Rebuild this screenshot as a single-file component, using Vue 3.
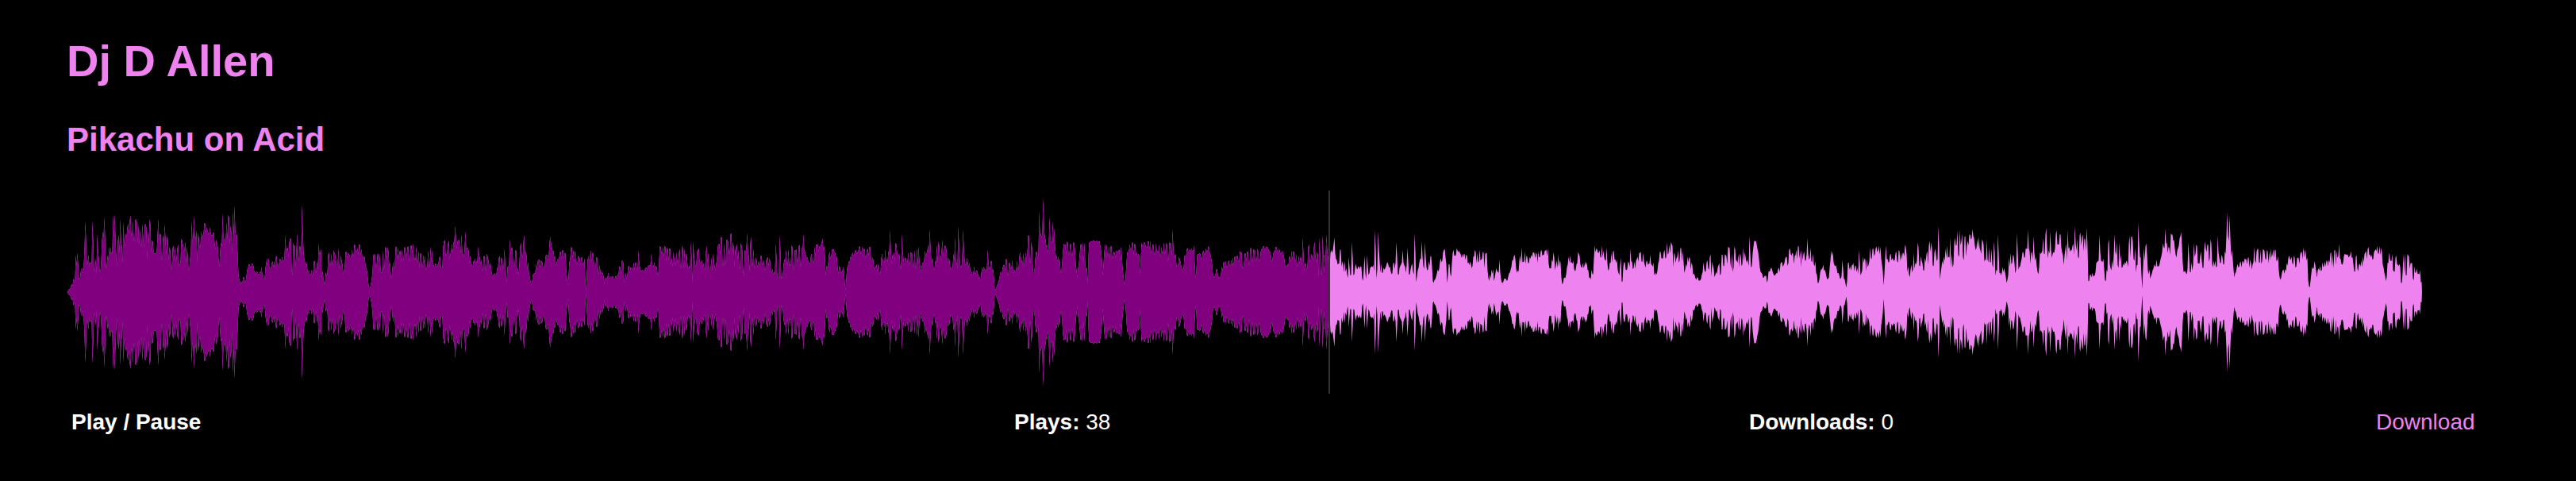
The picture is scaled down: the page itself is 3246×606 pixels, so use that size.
<script setup>
import { ref, computed } from 'vue'

const WIDTH = 2968
const HEIGHT = 256
const MID = HEIGHT / 2

// Loudness of the track. Triples are "position,quiet,loud" and pairs are
// "position,peak"; levels count thirds of a unit from the middle line.
const sections = [
  { from: -24, scale: 3, data: `72,0,0 90,18,30 100,30,70 107,140 112,149 118,35,50 125,60,80 132,70,170 142,268 150,90,155 160,75,125 169,270 180,75,135 188,220 198,60,120 207,180,230 214,283 220,70,110 232,130,185 243,140,180 247,292 253,295 258,75,130 268,160,240 274,275 282,110,160 287,266 295,200,230 303,220,260 313,290 320,180,275 333,200,270 345,150,250 357,180,275 370,100,265 383,170,275 392,150,220 405,130,150 417,277 420,150,250 432,130,240 437,60,180 443,256 450,130,215 465,90,140 478,90,200 500,70,210 520,130,225 532,50,140 544,268 554,289 562,90,255 572,160,200 587,215,265 600,230,250 620,200,245 632,150,225 648,95,130 655,160,210 661,297 668,170,200 676,190,292 686,190,275 695,120,220 701,305 707,327 714,180,232 719,60,90 725,32,36 740,38,58 748,40,45 755,90,105 773,80,115 790,65,80 800,55,75 808,95 818,38,65 830,80,135 845,80,105 865,90,150 880,105,125 893,120,170 898,216 912,110,205 928,80,200 943,222 952,110,190 961,331 968,100,190 980,70,100 995,45,80 1005,70,135 1015,80,110 1023,183 1033,60,165 1041,30,60 1045,0,40 1050,50,80 1063,80,180 1085,80,165 1100,85,165 1115,60,100 1125,120,165 1140,110,140 1152,140,182 1168,140,184 1185,130,170 1198,100,140 1206,60,80 1213,17,17 1220,17,17 1228,80,145 1245,85,140 1262,60,150 1285,120,182 1298,50,70 1310,90,160 1325,110,175 1350,110,165 1378,130,190 1403,80,180 1430,90,155 1455,110,175 1465,80,110 1480,95,140 1498,110,210` },
  { from: 456, scale: 3, data: `60,130,210 75,115,205 90,150,195 100,250 110,150,210 122,155,220 132,130,180 139,230 148,110,185 158,110,135 170,75,110 180,95,165 187,172 200,80,140 214,95,160 230,85,115 240,58,70 255,68,75 262,90,125 275,85,158 286,165 293,30,60 300,85,130 307,200 316,90,175 328,80,165 338,50,100 345,140,175 352,130,205 361,215 370,85,160 380,60,80 387,15,30 397,75,95 415,85,125 432,70,110 445,110,165 452,120,160 460,190,215 470,140,160 482,75,115 490,130,142 510,110,170 520,90,140 525,10,30 530,90,110 537,140,173 555,110,160 575,100,140 588,80,145 594,5,20 600,85,130 610,110,175 625,90,140 640,80,135 648,45,80 655,60,80 663,32,50 670,52,56 683,55,85 690,50,60 710,48,62 715,65,105 733,60,120 745,30,75 755,65,100 770,80,110 785,80,110 793,158 800,78,92 810,75,80 828,90,100 840,145 845,95,112 860,90,112 866,35,60 872,145,173 890,120,180 902,120,190 915,85,150 932,80,145 955,85,185 970,85,165 985,75,95 992,188 995,20,60 1000,193 1010,80,165 1022,90,160 1038,80,110 1050,85,175 1063,80,120 1075,85,170 1082,70,85 1090,120,188 1105,125,213 1115,80,180 1125,140,200 1143,130,217 1155,80,150 1165,100,180 1180,80,180 1193,50,150 1204,223 1213,75,170 1219,90,205 1230,80,185 1243,85,115 1255,100,140 1270,80,110 1282,90,140 1300,65,85 1312,182 1317,40,60 1327,215 1335,50,60 1347,100,155 1370,90,172 1385,80,150 1400,95,175 1417,220 1425,130,150 1440,105,110 1450,110,175 1462,120,190 1475,150,180 1486,170,213 1498,130,170` },
  { from: 936, scale: 3, data: `60,60,80 66,90,130 78,120,170 97,140,172 108,60,100 118,60,90 127,70,105 135,5,20 141,90,95 155,120,150 175,125,170 193,140,180 210,120,160 230,130,175 247,65,90 257,80,118 265,65,75 272,100,160 295,120,175 304,235 315,100,140 325,140,215 343,90,120 349,220 360,100,140 380,90,160 400,100,160 412,110,175 420,65,80 430,105,140 445,140,200 454,236 462,110,160 470,60,80 481,120,215 492,100,150 502,120,205 520,120,145 537,65,90 549,140,225 555,85,120 562,248 570,90,130 580,235 588,100,120 598,110,155 608,60,70 620,70,105 635,60,80 645,38,50 653,80,115 662,80,90 673,160 682,90,115 688,80,130 694,60,80 699,5,10 710,25,32 722,60,90 740,60,120 752,70,125 764,80,130 772,65,80 788,90,140 802,100,200 812,85,120 822,140,218 832,120,230 848,60,90 856,120,185 863,130,170 868,305 875,200,240 883,355 890,180,210 900,150,180 907,284 913,180,210 919,268 926,240 931,90,140 940,140,175 950,50,60 957,150,185 985,130,192 1000,150,185 1012,50,70 1020,120,185 1042,110,185 1050,30,40 1055,180,190 1065,190,196 1085,188,194 1100,170,190 1107,60,70 1115,100,180 1130,130,180 1155,120,160 1175,120,180 1183,80,90 1190,12,15 1200,140,155 1212,150,190 1225,140,188 1245,120,140 1249,50,60 1253,180,190 1275,170,190 1295,140,192 1320,140,190 1340,120,190 1352,100,200 1362,120,215 1372,236 1382,100,150 1400,90,150 1411,65,80 1418,130,160 1438,140,170` },
  { from: 1416, scale: 3, data: `0,150,160 12,150,178 19,35,40 25,140,165 40,120,140 55,150,173 76,130,170 85,50,55 100,75,105 108,45,55 124,80,125 140,85,110 152,90,135 172,105,130 187,100,158 197,90,150 218,110,165 235,120,160 250,120,172 262,115,140 270,160,173 290,160,176 300,140,170 307,100,110 313,150,172 335,140,170 348,110,155 360,90,95 375,100,145 393,120,170 405,90,130 418,90,160 424,205 432,70,130 450,100,185 460,95,130 470,150,207 483,60,140 487,203 497,50,120 500,213 508,80,150 515,217 523,50,130 530,120,165 540,160,180 544,208 550,80,120 565,110,165 575,80,115 583,70,125 592,45,60 598,133 605,65,80 610,190 617,60,80 625,90,110 645,75,95 652,15,40 656,100,153 665,40,60 668,140 675,70,90 688,80,122 697,235 703,55,90 709,230 716,75,120 728,75,90 745,105,115 760,40,105 766,90,125 778,190 785,65,85 795,100,115 802,160 812,70,105 820,168 830,65,90 838,90,130 847,223 852,30,50 865,110,130 874,192 880,85,105 886,188 895,75,100 908,110,160 916,25,35 930,60,70 936,70,100 948,110,150 963,120,168 970,20,35 976,90,120 984,45,60 990,135,165 1008,150,172 1018,130,155 1035,120,145 1050,110,145 1063,80,100 1071,130,165 1080,90,140 1090,120,168 1110,95,155 1119,110,165 1127,40,60 1135,55,80 1143,60,100 1148,30,50 1156,80,105 1166,80,135 1177,20,25 1185,50,60 1196,40,45 1212,90,105 1222,130,158 1236,50,80 1250,120,168 1265,100,155 1280,110,140 1295,130,160 1310,110,155 1330,140,165 1350,130,165 1357,70,80 1370,110,155 1378,70,100 1388,90,160 1398,75,110 1405,12,20 1411,60,70 1417,40,50 1425,90,130 1441,120,157 1454,70,80 1464,120,150 1478,90,115 1488,85,100 1497,110,150` },
  { from: 1896, scale: 3, data: `64,45,80 68,70,145 80,50,60 87,150,180 105,140,160 117,120,180 125,85,110 133,120,180 140,60,80 150,110,165 165,110,150 180,65,85 187,70,135 190,10,20 196,85,110 213,85,130 222,165 232,80,110 245,95,120 257,110,170 270,120,150 280,80,110 302,100,165 312,70,95 323,50,65 328,125,160 345,125,150 360,130,190 377,130,190 388,70,150 400,110,175 418,110,185 425,60,85 438,105,145 455,80,110 463,55,65 475,40,60 487,38,45 493,70,120 503,60,135 515,60,140 527,60,140 536,35,95 545,60,80 555,65,100 562,35,110 568,100,155 580,100,155 600,110,175 608,75,180 622,110,155 638,80,140 652,110,178 665,95,115 673,213 680,90,120 690,195,200 700,180,195 710,90,110 716,60,80 725,40,70 735,60,62 740,20,35 745,70,90 757,80,92 768,50,65 785,75,105 800,90,120 815,90,150 825,150,165 845,85,130 852,120,175 863,100,170 875,100,150 884,120,160 891,205 897,80,120 904,168 914,110,155 922,75,120 931,17,22 940,70,80 950,90,115 962,60,68 970,30,50 977,90,110 983,140,180 992,100,150 1003,70,90 1015,50,60 1024,122 1030,45,60 1038,12,20 1045,70,130 1055,75,95 1065,80,115 1080,70,95 1087,160 1092,65,100 1103,110,140 1112,80,120 1125,115,165 1145,120,175 1165,140,195 1173,90,130 1178,15,60 1182,70,130 1190,177 1205,110,145 1215,110,125 1230,120,170 1248,120,155 1261,110,180 1270,75,110 1280,50,90 1292,80,185 1297,60,65 1304,120,215 1310,110,200 1325,75,110 1340,95,150 1357,130,205 1367,85,120 1377,130,185 1387,250 1391,40,50 1402,90,130 1418,130,180 1429,110,222 1437,80,140 1450,150,238 1462,130,225 1474,150,235 1485,130,225 1495,110,205` },
  { from: 2376, scale: 2.45, data: `52,190,230 63,210,245 70,140,180 78,170,220 88,120,195 97,80,190 107,80,195 118,110,155 128,80,185 134,50,85 141,218 148,50,75 157,75,115 167,30,40 172,60,145 187,75,170 193,70,85 200,223 208,90,100 215,130,155 232,130,165 234,237 241,110,165 250,212 258,110,130 265,55,65 270,140,170 285,150,220 291,242 298,120,170 302,230 310,130,150 320,180,235 335,150,220 343,100,120 352,120,190 357,235 370,140,180 378,250 388,130,200 395,150,235 403,150,225 412,150,190 415,245 418,40,60 432,60,80 438,50,60 447,110,140 454,218 460,110,150 467,100,120 472,20,30 482,110,210 490,80,110 501,220 507,100,210 517,110,180 525,60,90 532,100,180 538,80,110 546,110,205 553,130,220 562,110,180 570,40,100 574,265 579,150,190 585,3,8 591,90,200 598,110,200 603,70,100 613,35,70 620,90,98 628,95,140 640,95,115 650,160,205 658,240 668,120,170 674,150,220 683,200,208 690,110,130 695,160,175 707,200,235 712,60,80 720,70,90 729,188 735,55,80 743,90,205 753,85,205 760,90,110 767,140,155 773,80,110 780,170,215 788,100,190 798,120,195 808,50,100 812,90,130 820,215 828,110,155 838,100,120 845,150,245 849,303 853,150,200 856,290 862,130,170 870,50,60 880,95,110 890,95,115 905,90,145 918,95,140 925,85,110 933,172 940,110,160 952,100,160 963,120,160 975,100,160 989,120,170 1005,100,145 1012,30,50 1018,80,95 1025,65,80 1040,120,150 1060,90,130 1075,110,155 1087,130,180 1095,90,135 1098,20,30 1102,12,15 1108,75,90 1118,90,130 1124,50,70 1133,80,105 1145,85,120 1160,100,130 1175,95,165 1197,110,180 1203,90,110 1212,140,155 1222,130,140 1230,140,155 1238,100,120 1241,40,50 1244,120,175 1252,80,100 1270,100,140 1287,140,180 1295,120,140 1310,150,175 1322,120,175 1330,90,110 1338,35,40 1344,100,130 1351,110,165 1360,85,140 1375,90,145 1383,60,100 1385,10,20 1390,65,140 1396,70,148 1410,70,130 1425,45,115 1440,50,100 1446,40,90 1449,20,20` },
]

function buildLevels() {
  const envelope = []
  const peaks = []
  for (const { from, scale, data } of sections) {
    for (const entry of data.split(' ')) {
      const [pos, a, b] = entry.split(',').map(Number)
      const x = from + pos / scale
      if (b === undefined) peaks.push([Math.floor(x), a / 3])
      else envelope.push([x, a / 3, b / 3])
    }
  }

  let seed = 7919
  const random = () => {
    seed = (seed * 1664525 + 1013904223) % 4294967296
    return seed / 4294967296
  }

  const levels = []
  let k = 0
  let mix = 0
  let hold = 0
  let loud = false
  for (let x = 0; x < WIDTH; x++) {
    while (k < envelope.length - 2 && envelope[k + 1][0] < x) k++
    const [x0, lo0, hi0] = envelope[k]
    const [x1, lo1, hi1] = envelope[k + 1]
    const t = Math.min(1, Math.max(0, (x - x0) / (x1 - x0)))
    const lo = lo0 + (lo1 - lo0) * t
    const hi = hi0 + (hi1 - hi0) * t
    if (hold === 0) {
      loud = !loud
      hold = 1 + Math.floor(random() * 2.4)
      mix = loud ? 0.65 + random() * 0.45 : random() * 0.5 - 0.1
    } else {
      mix += (random() - 0.5) * 0.3
    }
    hold--
    levels.push(Math.max(0, lo + (hi - lo) * Math.min(1.08, mix)))
  }
  for (const [x, level] of peaks) {
    levels[x] = level
    levels[x + 1] = Math.max(levels[x + 1], level * 0.7)
  }
  return levels
}

const levels = buildLevels()
const upper = levels.map((v, x) => `${x + 0.5} ${(MID - v).toFixed(1)}`)
const lower = levels.map((v, x) => `${x + 0.5} ${(MID + v).toFixed(1)}`).reverse()
const wavePath = `M0 ${MID}L${upper.join('L')}L${WIDTH} ${MID}L${lower.join('L')}Z`

const progress = ref(1590 / WIDTH)
const cursorX = computed(() => Math.round(progress.value * WIDTH))
const plays = ref(38)
const downloads = ref(0)

function seek(event) {
  const box = event.currentTarget.getBoundingClientRect()
  progress.value = (event.clientX - box.left) / box.width
}
</script>

<template>
  <main class="player">
    <h1>Dj D Allen</h1>
    <h2>Pikachu on Acid</h2>
    <svg
      class="wave"
      :viewBox="`0 0 ${WIDTH} ${HEIGHT}`"
      preserveAspectRatio="none"
      role="img"
      aria-label="Waveform"
      @click="seek"
    >
      <defs>
        <clipPath id="played">
          <rect x="0" y="0" :width="cursorX" :height="HEIGHT" />
        </clipPath>
      </defs>
      <path :d="wavePath" fill="violet" />
      <path :d="wavePath" fill="purple" clip-path="url(#played)" />
      <rect :x="cursorX" y="0" width="2" :height="HEIGHT" fill="#333" />
    </svg>
    <div class="info">
      <div><button type="button">Play / Pause</button></div>
      <div><b>Plays:</b> {{ plays }}</div>
      <div><b>Downloads:</b> {{ downloads }}</div>
      <div><a href="#download">Download</a></div>
    </div>
  </main>
</template>

<style>
body {
  margin: 0;
  background: #000;
}
</style>

<style scoped>
.player {
  padding: 45px 84px 56px;
  color: #fff;
  font: 28px/32px "Liberation Sans", Arial, sans-serif;
}
h1,
h2 {
  margin: 0;
  color: violet;
  font-weight: bold;
}
h1 {
  font-size: 56px;
  line-height: 64px;
  margin-bottom: 43px;
}
h2 {
  font-size: 42px;
  line-height: 48px;
  margin-bottom: 40px;
}
.wave {
  display: block;
  width: calc(100% - 110px);
  height: 256px;
  cursor: pointer;
}
.info {
  display: grid;
  grid-template-columns: 1188fr 926fr 790fr 168fr;
  margin-top: 20px;
  padding-left: 6px;
  white-space: nowrap;
}
button {
  padding: 0;
  border: 0;
  background: none;
  color: inherit;
  font: inherit;
  font-weight: bold;
  cursor: pointer;
}
a {
  color: violet;
  text-decoration: none;
}
</style>
